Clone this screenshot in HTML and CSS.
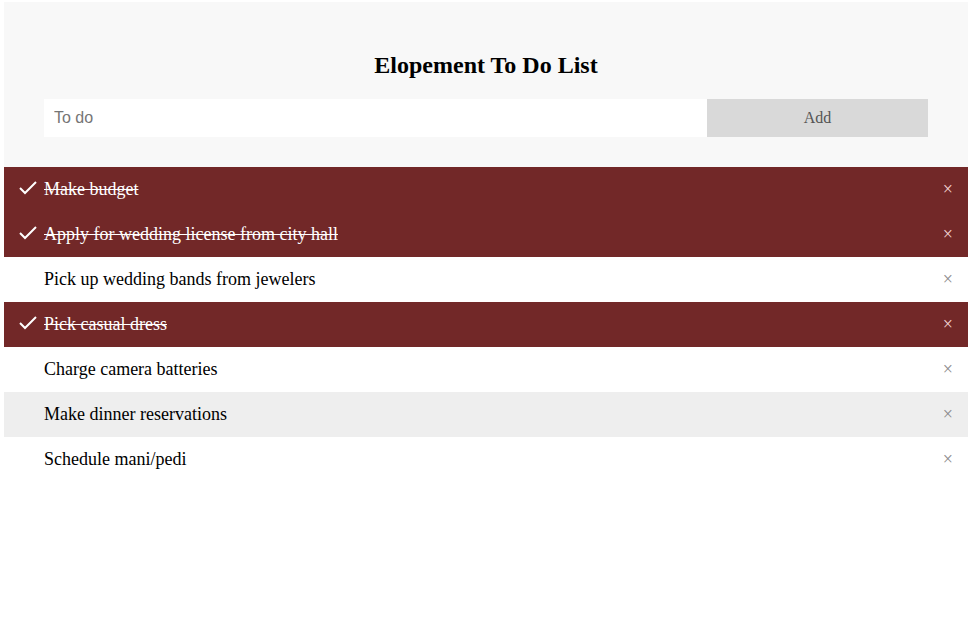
FILE: index.html
```html
<!DOCTYPE html>
<html lang="en">
<head>
<meta charset="utf-8">
<title>Elopement To Do List</title>
<link rel="stylesheet" href="styles.css">
</head>
<body>
<div class="page">
  <div class="header">
    <h2 class="title">Elopement To Do List</h2>
    <div class="form">
      <input class="todo-input" type="text" placeholder="To do">
      <span class="add-btn">Add</span>
    </div>
  </div>
  <ul class="list">
    <li class="item checked"><svg class="check" width="20" height="16" viewBox="0 0 20 16"><polyline points="2,8 7,13 18,2" fill="none" stroke="#fff" stroke-width="2"/></svg>Make budget<span class="close">×</span></li>
    <li class="item checked"><svg class="check" width="20" height="16" viewBox="0 0 20 16"><polyline points="2,8 7,13 18,2" fill="none" stroke="#fff" stroke-width="2"/></svg>Apply for wedding license from city hall<span class="close">×</span></li>
    <li class="item">Pick up wedding bands from jewelers<span class="close">×</span></li>
    <li class="item checked"><svg class="check" width="20" height="16" viewBox="0 0 20 16"><polyline points="2,8 7,13 18,2" fill="none" stroke="#fff" stroke-width="2"/></svg>Pick casual dress<span class="close">×</span></li>
    <li class="item">Charge camera batteries<span class="close">×</span></li>
    <li class="item hover">Make dinner reservations<span class="close">×</span></li>
    <li class="item">Schedule mani/pedi<span class="close">×</span></li>
  </ul>
</div>
</body>
</html>
```
FILE: styles.css
```css
html, body {
  margin: 0;
  padding: 0;
  background: #fff;
}
body {
  font-family: "Liberation Serif", "Times New Roman", serif;
}
.page {
  padding: 2px 7px 0 4px;
}
.header {
  background: #f8f8f8;
  padding: 30px 40px;
  text-align: center;
}
.title {
  margin: 20px 0;
  font-size: 24px;
  font-weight: bold;
  line-height: 27px;
  color: #000;
}
.form {
  display: flex;
}
.todo-input {
  flex: 1 1 auto;
  width: 75%;
  margin: 0;
  border: none;
  border-radius: 0;
  padding: 10px;
  height: 38px;
  box-sizing: border-box;
  font-family: "Liberation Sans", Arial, sans-serif;
  font-size: 16px;
  background: #fff;
  outline: none;
}
.todo-input::placeholder {
  color: #757575;
}
.add-btn {
  flex: 0 0 25%;
  background: #d9d9d9;
  color: #555;
  font-family: "Liberation Serif", "Times New Roman", serif;
  font-size: 16px;
  height: 38px;
  line-height: 38px;
  text-align: center;
}
.list {
  margin: 0;
  padding: 0;
  list-style: none;
}
.item {
  position: relative;
  padding: 12px 8px 12px 40px;
  font-size: 18px;
  line-height: 21px;
  color: #000;
  background: #fff;
}
.item.hover {
  background: #eee;
}
.item.checked {
  background: #722828;
  color: #fff;
  text-decoration: line-through;
}
.check {
  position: absolute;
  left: 14px;
  top: 13px;
}
.close {
  position: absolute;
  right: 0;
  top: 0;
  padding: 12px 15px;
  font-size: 18px;
  line-height: 21px;
  color: #888;
  text-decoration: none;
  display: inline-block;
}
.item.checked .close {
  color: #f4d4d4;
}
```
